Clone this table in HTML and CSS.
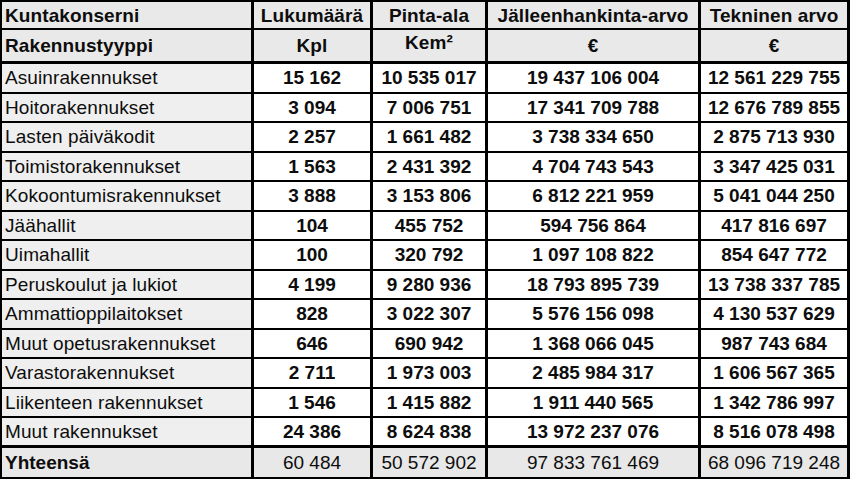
FILE: index.html
```html
<!DOCTYPE html>
<html lang="fi">
<head>
<meta charset="utf-8">
<title>Kuntakonserni rakennukset</title>
<link rel="stylesheet" href="styles.css">
</head>
<body>
<table class="sheet">
  <colgroup>
    <col class="c1"><col class="c2"><col class="c3"><col class="c4"><col class="c5">
  </colgroup>
  <thead>
    <tr class="h1">
      <th class="name">Kuntakonserni</th>
      <th>Lukumäärä</th>
      <th>Pinta-ala</th>
      <th>Jälleenhankinta-arvo</th>
      <th>Tekninen arvo</th>
    </tr>
    <tr class="h2">
      <th class="name">Rakennustyyppi</th>
      <th>Kpl</th>
      <th class="up">Kem²</th>
      <th>€</th>
      <th>€</th>
    </tr>
  </thead>
  <tbody>
    <tr><td class="name">Asuinrakennukset</td><td>15 162</td><td>10 535 017</td><td>19 437 106 004</td><td>12 561 229 755</td></tr>
    <tr><td class="name">Hoitorakennukset</td><td>3 094</td><td>7 006 751</td><td>17 341 709 788</td><td>12 676 789 855</td></tr>
    <tr><td class="name">Lasten päiväkodit</td><td>2 257</td><td>1 661 482</td><td>3 738 334 650</td><td>2 875 713 930</td></tr>
    <tr><td class="name">Toimistorakennukset</td><td>1 563</td><td>2 431 392</td><td>4 704 743 543</td><td>3 347 425 031</td></tr>
    <tr><td class="name">Kokoontumisrakennukset</td><td>3 888</td><td>3 153 806</td><td>6 812 221 959</td><td>5 041 044 250</td></tr>
    <tr><td class="name">Jäähallit</td><td>104</td><td>455 752</td><td>594 756 864</td><td>417 816 697</td></tr>
    <tr><td class="name">Uimahallit</td><td>100</td><td>320 792</td><td>1 097 108 822</td><td>854 647 772</td></tr>
    <tr><td class="name">Peruskoulut ja lukiot</td><td>4 199</td><td>9 280 936</td><td>18 793 895 739</td><td>13 738 337 785</td></tr>
    <tr><td class="name">Ammattioppilaitokset</td><td>828</td><td>3 022 307</td><td>5 576 156 098</td><td>4 130 537 629</td></tr>
    <tr><td class="name">Muut opetusrakennukset</td><td>646</td><td>690 942</td><td>1 368 066 045</td><td>987 743 684</td></tr>
    <tr><td class="name">Varastorakennukset</td><td>2 711</td><td>1 973 003</td><td>2 485 984 317</td><td>1 606 567 365</td></tr>
    <tr><td class="name">Liikenteen rakennukset</td><td>1 546</td><td>1 415 882</td><td>1 911 440 565</td><td>1 342 786 997</td></tr>
    <tr class="last"><td class="name">Muut rakennukset</td><td>24 386</td><td>8 624 838</td><td>13 972 237 076</td><td>8 516 078 498</td></tr>
  </tbody>
  <tfoot>
    <tr class="total">
      <td class="name">Yhteensä</td><td>60 484</td><td>50 572 902</td><td>97 833 761 469</td><td>68 096 719 248</td>
    </tr>
  </tfoot>
</table>
</body>
</html>
```

FILE: styles.css
```css
html, body {
  margin: 0;
  padding: 0;
  background: #ffffff;
}

.sheet {
  border-collapse: separate;
  border-spacing: 0;
  table-layout: fixed;
  width: 850px;
  border-top: 2px solid #000;
  border-left: 2px solid #000;
  font-family: "Liberation Sans", Arial, sans-serif;
  font-size: 19px;
  color: #0d0d0d;
}

.c1 { width: 252px; }
.c2 { width: 119px; }
.c3 { width: 115px; }
.c4 { width: 213px; }
.c5 { width: 149px; }

.sheet th,
.sheet td {
  box-sizing: border-box;
  padding: 0 4px;
  border-right: 3px solid #000;
  border-bottom: 2px solid #000;
  text-align: center;
  vertical-align: middle;
  white-space: nowrap;
  overflow: hidden;
  line-height: 1;
}

.sheet th {
  background: #e9e9e9;
  font-weight: 700;
  letter-spacing: 0.1px;
}

.h1 th { height: 28px; }
.h2 th {
  height: 34px;
  border-bottom-width: 3px;
}
.h2 th.up { padding-bottom: 6px; }

.sheet tbody td {
  height: 29.5px;
  background: #ffffff;
  font-weight: 700;
}
.sheet tbody tr.last td { border-bottom-width: 3px; }

.sheet .name {
  text-align: left;
  padding-left: 3px;
}

.sheet tbody td.name {
  background: #efefef;
  font-weight: 400;
  letter-spacing: 0.1px;
}

.total td {
  height: 32px;
  border-bottom-width: 3px;
  background: #e8e8e8;
  font-weight: 400;
}
.total td.name { font-weight: 700; }
```
